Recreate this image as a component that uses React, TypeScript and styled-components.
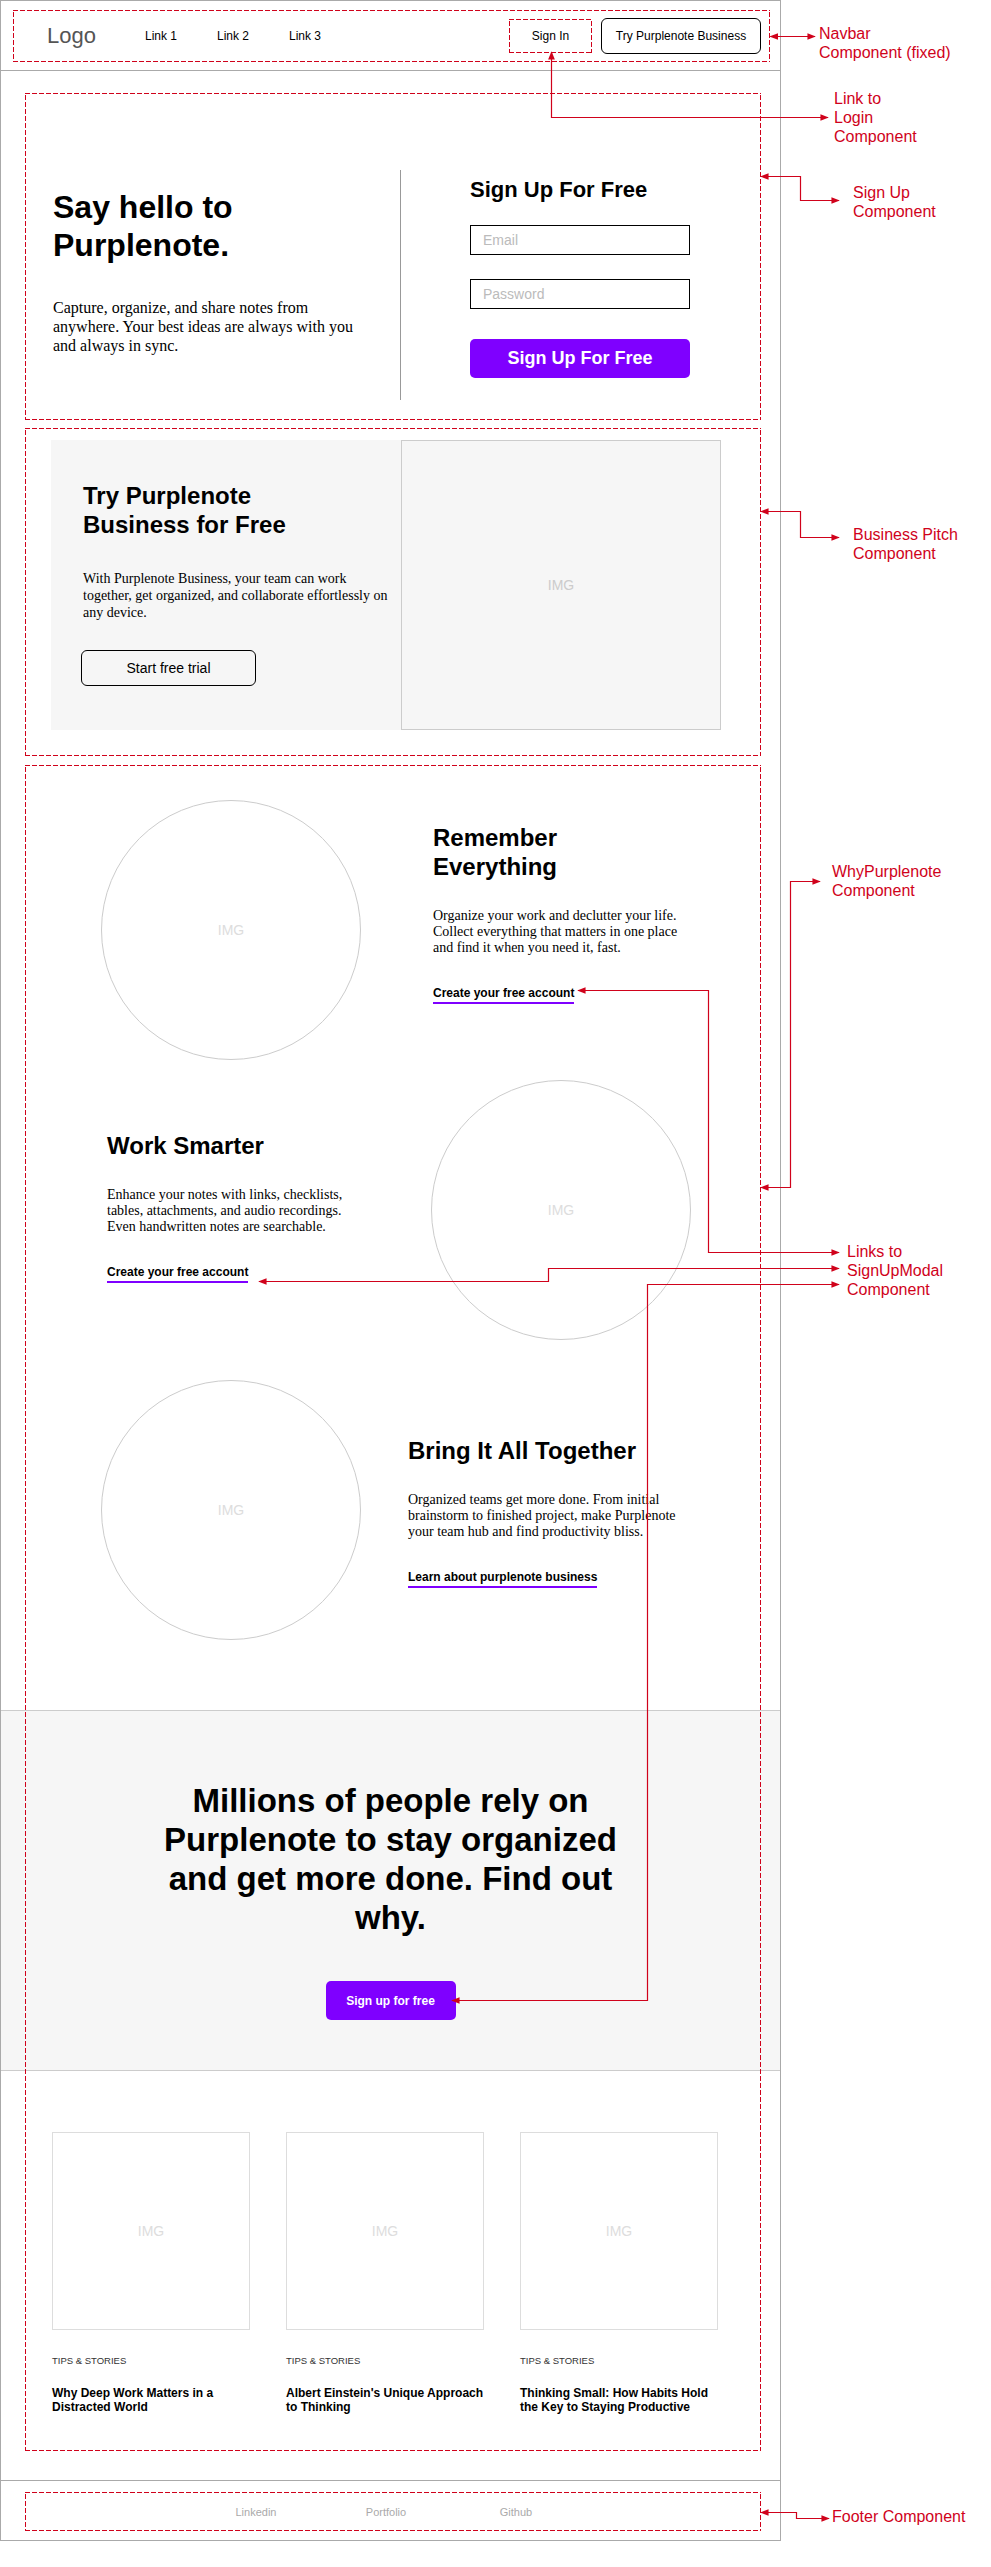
import React from "react";
import styled, { createGlobalStyle, css } from "styled-components";

const RED = "#d0021b";
const PURPLE = "#7f00ff";
const SANS = `"Liberation Sans", Arial, sans-serif`;
const SERIF = `"Liberation Serif", "Times New Roman", serif`;

// red dashed outline of a component, drawn with longer dashes than a css dashed border
const dashed = css`
  border: 1px solid transparent;
  background-origin: border-box;
  background-image: linear-gradient(90deg, ${RED} 5px, transparent 5px),
    linear-gradient(90deg, ${RED} 5px, transparent 5px),
    linear-gradient(0deg, ${RED} 5px, transparent 5px),
    linear-gradient(0deg, ${RED} 5px, transparent 5px);
  background-size: 7px 1px, 7px 1px, 1px 7px, 1px 7px;
  background-position: left top, left bottom, left top, right top;
  background-repeat: repeat-x, repeat-x, repeat-y, repeat-y;
`;

const GlobalStyle = createGlobalStyle`
  * { box-sizing: border-box; }
  html, body { margin: 0; padding: 0; background: #fff; }
  body { font-family: ${SANS}; color: #000; }
  h1, h2, h3, h4, p { margin: 0; }
`;

const Page = styled.div`
  position: relative;
  width: 991px;
  min-height: 2567px;
`;

const Frame = styled.div`
  width: 781px;
  border: 1px solid #aaa;
`;

/* ---------- navbar ---------- */

const NavArea = styled.header`
  height: 70px;
  padding: 9px 0 0 12px;
  border-bottom: 1px solid #aaa;
`;

const Navbar = styled.nav`
  ${dashed};
  width: 757px;
  height: 52px;
  display: flex;
  align-items: center;
  padding: 0 8px 0 33px;
`;

const Logo = styled.div`
  font-size: 22px;
  color: #555;
`;

const NavLinks = styled.div`
  display: flex;
  margin-left: 49px;
`;

const NavLink = styled.a`
  width: 72px;
  font-size: 12px;
  color: #000;
  text-decoration: none;
`;

const NavRight = styled.div`
  margin-left: auto;
  display: flex;
  align-items: center;
  gap: 9px;
`;

const SignInLink = styled.a`
  ${dashed};
  width: 83px;
  height: 34px;
  display: flex;
  align-items: center;
  justify-content: center;
  font-size: 12px;
  color: #000;
`;

const OutlineButton = styled.button<{ $w: number; $size: number }>`
  width: ${(p) => p.$w}px;
  height: 36px;
  border: 1px solid #000;
  border-radius: 6px;
  background: transparent;
  font-family: ${SANS};
  font-size: ${(p) => p.$size}px;
  color: #000;
  padding: 0;
`;

const PrimaryButton = styled.button<{ $w: number; $h: number; $size: number; $gap: number }>`
  margin-top: ${(p) => p.$gap}px;
  width: ${(p) => p.$w}px;
  height: ${(p) => p.$h}px;
  border: none;
  border-radius: 5px;
  background: ${PURPLE};
  color: #fff;
  font-family: ${SANS};
  font-weight: 700;
  font-size: ${(p) => p.$size}px;
  padding: 0;
`;

/* ---------- sign up ---------- */

const SignUpBox = styled.section`
  ${dashed};
  width: 736px;
  margin: 22px 0 0 24px;
  padding: 76px 0 19px 27px;
  display: flex;
`;

const Intro = styled.div`
  width: 347px;
  padding-top: 18px;
`;

const HeroTitle = styled.h1`
  font-size: 32px;
  line-height: 38px;
  font-weight: 700;
`;

const HeroText = styled.p`
  margin-top: 34px;
  width: 310px;
  font-family: ${SERIF};
  font-size: 16px;
  line-height: 19px;
`;

const SignUpForm = styled.form`
  height: 230px;
  border-left: 1px solid #999;
  padding: 7px 0 0 69px;
  display: flex;
  flex-direction: column;
  align-items: flex-start;
`;

const FormTitle = styled.h2`
  font-size: 22px;
  line-height: 26px;
  font-weight: 700;
`;

const Field = styled.input<{ $gap: number }>`
  margin-top: ${(p) => p.$gap}px;
  width: 220px;
  height: 30px;
  border: 1px solid #000;
  border-radius: 0;
  padding: 0 12px;
  font-family: ${SANS};
  font-size: 14px;
  outline: none;
  &::placeholder {
    color: #bbb;
  }
`;

/* ---------- business pitch ---------- */

const PitchBox = styled.section`
  ${dashed};
  width: 736px;
  margin: 8px 0 0 24px;
  padding: 11px 0 25px 25px;
`;

const PitchCard = styled.div`
  display: grid;
  grid-template-columns: 350px 320px;
  width: 670px;
  height: 290px;
  background: #f6f6f6;
`;

const PitchText = styled.div`
  padding: 41px 0 0 32px;
`;

const SectionTitle = styled.h3`
  font-size: 24px;
  line-height: 29px;
  font-weight: 700;
`;

const PitchBody = styled.p`
  margin: 31px 0 29px;
  width: 310px;
  font-family: ${SERIF};
  font-size: 14px;
  line-height: 17px;
`;

const TrialButton = styled(OutlineButton)`
  margin-left: -2px;
`;

const Placeholder = styled.div<{ $tone: string }>`
  display: flex;
  align-items: center;
  justify-content: center;
  font-size: 14px;
  color: ${(p) => p.$tone};
`;

const PitchImage = styled(Placeholder)`
  border: 1px solid #ccc;
  background: #f6f6f6;
`;

/* ---------- why purplenote + cta + blog ---------- */

const Story = styled.div`
  position: relative;
  width: 736px;
  margin: 9px 0 0 24px;
  padding: 35px 0 37px;

  &::after {
    ${dashed};
    content: "";
    position: absolute;
    inset: 0;
    pointer-events: none;
    z-index: 1;
  }
`;

const FeatureRow = styled.div<{ $pad: number; $gap: number }>`
  display: flex;
  align-items: flex-start;
  margin-top: ${(p) => p.$gap}px;
  padding-left: ${(p) => p.$pad}px;
`;

const Circle = styled(Placeholder)<{ $gap?: number }>`
  flex: none;
  width: 260px;
  height: 260px;
  margin-left: ${(p) => p.$gap || 0}px;
  border: 1px solid #ccc;
  border-radius: 50%;
`;

const FeatureText = styled.div<{ $gap: number; $top: number; $width: number }>`
  flex: none;
  width: ${(p) => p.$width}px;
  margin-left: ${(p) => p.$gap}px;
  padding-top: ${(p) => p.$top}px;
`;

const FeatureBody = styled.p`
  margin-top: 27px;
  font-family: ${SERIF};
  font-size: 14px;
  line-height: 16px;
`;

const TextLink = styled.a`
  display: inline-block;
  margin-top: 30px;
  padding-bottom: 2px;
  border-bottom: 2px solid ${PURPLE};
  font-size: 12px;
  line-height: 14px;
  font-weight: 700;
  color: #000;
  text-decoration: none;
`;

const Cta = styled.section`
  margin: 70px -19px 0 -24px;
  padding: 70px 0 50px;
  border-top: 1px solid #ccc;
  border-bottom: 1px solid #ccc;
  background: #f6f6f6;
  display: flex;
  flex-direction: column;
  align-items: center;
`;

const CtaTitle = styled.h2`
  width: 480px;
  text-align: center;
  font-size: 33px;
  line-height: 39px;
  font-weight: 700;
`;

const Blog = styled.div`
  margin-top: 61px;
  padding-left: 27px;
  display: grid;
  grid-template-columns: repeat(3, 198px);
  column-gap: 36px;
`;

const Thumb = styled(Placeholder)`
  height: 198px;
  border: 1px solid #ddd;
`;

const Tag = styled.div`
  margin-top: 25px;
  font-size: 9.5px;
  line-height: 12px;
  color: #333;
`;

const PostTitle = styled.h4`
  margin-top: 19px;
  width: 202px;
  font-size: 12px;
  line-height: 14px;
  font-weight: 700;
`;

/* ---------- footer ---------- */

const FooterArea = styled.footer`
  margin-top: 29px;
  border-top: 1px solid #aaa;
  padding: 11px 0 9px 24px;
`;

const FooterBar = styled.div`
  ${dashed};
  width: 736px;
  height: 39px;
  display: flex;
  align-items: center;
  justify-content: center;
  padding-right: 14px;
`;

const FooterLink = styled.a`
  width: 130px;
  text-align: center;
  font-size: 11px;
  color: #aaa;
`;

/* ---------- annotations ---------- */

const Note = styled.div<{ $x: number; $y: number }>`
  position: absolute;
  left: ${(p) => p.$x}px;
  top: ${(p) => p.$y}px;
  color: ${RED};
  font-size: 16px;
  line-height: 19px;
  white-space: nowrap;
`;

const Wires = styled.svg`
  position: absolute;
  top: 0;
  left: 0;
  pointer-events: none;
  z-index: 2;
`;

const wires = [
  "M770.5,36.5 L815,36.5",
  "M551.5,52 L551.5,117.5 L828,117.5",
  "M761,176.5 L800.5,176.5 L800.5,200.5 L839,200.5",
  "M761,511.5 L800.5,511.5 L800.5,537.5 L839,537.5",
  "M761,1187.5 L790.5,1187.5 L790.5,881.5 L820,881.5",
  "M578,990.5 L708.5,990.5 L708.5,1252.5 L839,1252.5",
  "M259,1281.5 L548.5,1281.5 L548.5,1268.5 L839,1268.5",
  "M452,2000.5 L647.5,2000.5 L647.5,1284.5 L839,1284.5",
  "M761,2512.5 L796.5,2512.5 L796.5,2518.5 L829,2518.5",
];

const notes = [
  { x: 819, y: 24, lines: ["Navbar", "Component (fixed)"] },
  { x: 834, y: 89, lines: ["Link to", "Login", "Component"] },
  { x: 853, y: 183, lines: ["Sign Up", "Component"] },
  { x: 853, y: 525, lines: ["Business Pitch", "Component"] },
  { x: 832, y: 862, lines: ["WhyPurplenote", "Component"] },
  { x: 847, y: 1242, lines: ["Links to", "SignUpModal", "Component"] },
  { x: 832, y: 2507, lines: ["Footer Component"] },
];

const posts = [
  "Why Deep Work Matters in a Distracted World",
  "Albert Einstein's Unique Approach to Thinking",
  "Thinking Small: How Habits Hold the Key to Staying Productive",
];

export default function App() {
  return (
    <Page>
      <GlobalStyle />
      <Frame>
        <NavArea>
          <Navbar>
            <Logo>Logo</Logo>
            <NavLinks>
              <NavLink>Link 1</NavLink>
              <NavLink>Link 2</NavLink>
              <NavLink>Link 3</NavLink>
            </NavLinks>
            <NavRight>
              <SignInLink>Sign In</SignInLink>
              <OutlineButton $w={160} $size={12}>
                Try Purplenote Business
              </OutlineButton>
            </NavRight>
          </Navbar>
        </NavArea>

        <SignUpBox>
          <Intro>
            <HeroTitle>
              Say hello to
              <br />
              Purplenote.
            </HeroTitle>
            <HeroText>
              Capture, organize, and share notes from anywhere. Your best ideas are always with you
              and always in sync.
            </HeroText>
          </Intro>
          <SignUpForm onSubmit={(e) => e.preventDefault()}>
            <FormTitle>Sign Up For Free</FormTitle>
            <Field $gap={22} placeholder="Email" />
            <Field $gap={24} placeholder="Password" type="password" />
            <PrimaryButton $gap={30} $w={220} $h={39} $size={18}>
              Sign Up For Free
            </PrimaryButton>
          </SignUpForm>
        </SignUpBox>

        <PitchBox>
          <PitchCard>
            <PitchText>
              <SectionTitle>
                Try Purplenote
                <br />
                Business for Free
              </SectionTitle>
              <PitchBody>
                With Purplenote Business, your team can work together, get organized, and
                collaborate effortlessly on any device.
              </PitchBody>
              <TrialButton $w={175} $size={14}>
                Start free trial
              </TrialButton>
            </PitchText>
            <PitchImage $tone="#ccc">IMG</PitchImage>
          </PitchCard>
        </PitchBox>

        <Story>
          <FeatureRow $pad={76} $gap={0}>
            <Circle $tone="#ddd">IMG</Circle>
            <FeatureText $gap={72} $top={23} $width={250}>
              <SectionTitle>
                Remember
                <br />
                Everything
              </SectionTitle>
              <FeatureBody>
                Organize your work and declutter your life. Collect everything that matters in one
                place and find it when you need it, fast.
              </FeatureBody>
              <TextLink>Create your free account</TextLink>
            </FeatureText>
          </FeatureRow>

          <FeatureRow $pad={82} $gap={20}>
            <FeatureText $gap={0} $top={51} $width={255}>
              <SectionTitle>Work Smarter</SectionTitle>
              <FeatureBody>
                Enhance your notes with links, checklists, tables, attachments, and audio
                recordings. Even handwritten notes are searchable.
              </FeatureBody>
              <TextLink>Create your free account</TextLink>
            </FeatureText>
            <Circle $tone="#ddd" $gap={69}>
              IMG
            </Circle>
          </FeatureRow>

          <FeatureRow $pad={76} $gap={40}>
            <Circle $tone="#ddd">IMG</Circle>
            <FeatureText $gap={47} $top={56} $width={270}>
              <SectionTitle>Bring It All Together</SectionTitle>
              <FeatureBody>
                Organized teams get more done. From initial brainstorm to finished project, make
                Purplenote your team hub and find productivity bliss.
              </FeatureBody>
              <TextLink>Learn about purplenote business</TextLink>
            </FeatureText>
          </FeatureRow>

          <Cta>
            <CtaTitle>
              Millions of people rely on Purplenote to stay organized and get more done. Find out
              why.
            </CtaTitle>
            <PrimaryButton $gap={44} $w={130} $h={39} $size={12}>
              Sign up for free
            </PrimaryButton>
          </Cta>

          <Blog>
            {posts.map((title, i) => (
              <div key={i}>
                <Thumb $tone="#ddd">IMG</Thumb>
                <Tag>TIPS &amp; STORIES</Tag>
                <PostTitle>{title}</PostTitle>
              </div>
            ))}
          </Blog>
        </Story>

        <FooterArea>
          <FooterBar>
            <FooterLink>Linkedin</FooterLink>
            <FooterLink>Portfolio</FooterLink>
            <FooterLink>Github</FooterLink>
          </FooterBar>
        </FooterArea>
      </Frame>

      {notes.map((n, i) => (
        <Note key={i} $x={n.x} $y={n.y}>
          {n.lines.map((l, j) => (
            <div key={j}>{l}</div>
          ))}
        </Note>
      ))}

      <Wires width="991" height="2567" viewBox="0 0 991 2567">
        <defs>
          <marker
            id="head"
            viewBox="0 0 10 10"
            refX="9"
            refY="5"
            markerWidth="7"
            markerHeight="7"
            orient="auto-start-reverse"
          >
            <path d="M0,1 L10,5 L0,9 z" fill={RED} />
          </marker>
        </defs>
        {wires.map((d, i) => (
          <path
            key={i}
            d={d}
            fill="none"
            stroke={RED}
            strokeWidth="1.2"
            markerStart="url(#head)"
            markerEnd="url(#head)"
          />
        ))}
      </Wires>
    </Page>
  );
}
